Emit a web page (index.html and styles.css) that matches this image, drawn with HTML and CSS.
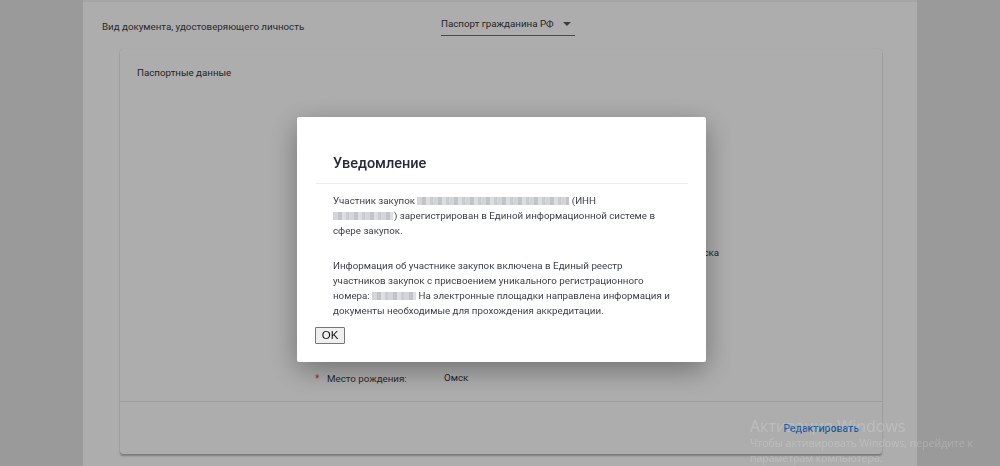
FILE: index.html
```html
<!DOCTYPE html>
<html lang="ru">
<head>
<meta charset="utf-8">
<title>Уведомление</title>
<link rel="stylesheet" href="styles.css">
</head>
<body>
<div class="page">
  <main class="main">
    <div class="doc-row">
      <span class="doc-label">Вид документа, удостоверяющего личность</span>
      <div class="select">
        <span class="select-text">Паспорт гражданина РФ</span>
        <span class="caret"></span>
      </div>
    </div>
    <section class="card">
      <h3 class="card-title">Паспортные данные</h3>
      <div class="fields">
        <div class="field"><span class="req">*</span><span class="label">Серия паспорта:</span><span class="value">5201</span></div>
        <div class="field"><span class="req">*</span><span class="label">Номер паспорта:</span><span class="value">000000</span></div>
        <div class="field"><span class="req">*</span><span class="label">Дата выдачи:</span><span class="value">01.01.2010</span></div>
        <div class="field"><span class="req">*</span><span class="label">Кем выдан:</span><span class="value">УФМС России по Омской области в Кировском АО, г. Омска</span></div>
        <div class="field"><span class="req">*</span><span class="label">Код подразделения:</span><span class="value">550-001</span></div>
        <div class="field"><span class="req">*</span><span class="label">Дата рождения:</span><span class="value">01.01.1980</span></div>
        <div class="field"><span class="req">*</span><span class="label">Место рождения:</span><span class="value value-up">Омск</span></div>
      </div>
      <div class="card-footer">
        <a class="edit">Редактировать</a>
      </div>
    </section>
  </main>
</div>

<div class="overlay"></div>

<div class="modal" role="dialog">
  <div class="modal-head">
    <h2 class="modal-title">Уведомление</h2>
  </div>
  <div class="modal-body">
    <p>Участник закупок <span class="redact r1"></span> (ИНН<br><span class="redact r2"></span>) зарегистрирован в Единой информационной системе в<br>сфере закупок.</p>
    <p>Информация об участнике закупок включена в Единый реестр<br>участников закупок с присвоением уникального регистрационного<br>номера: <span class="redact r3"></span> На электронные площадки направлена информация и<br>документы необходимые для прохождения аккредитации.</p>
  </div>
  <button class="ok-btn" type="button">OK</button>
</div>

<div class="watermark">
  <div class="wm-title">Активация Windows</div>
  <div class="wm-text">Чтобы активировать Windows, перейдите к<br>параметрам компьютера.</div>
</div>
</body>
</html>
```

FILE: styles.css
```css
html, body {
  margin: 0;
  padding: 0;
  height: 100%;
}

body {
  background: #e3e3e3;
  font-family: Roboto, "Liberation Sans", Arial, sans-serif;
  font-size: 9.75px;
  color: #3c3f47;
  overflow: hidden;
}

.page {
  min-height: 100%;
}

.main {
  width: 834px;
  margin: 0 auto;
  min-height: 466px;
  background: #ffffff;
  border-top: 2px solid #f3f3f3;
  box-sizing: border-box;
}

.doc-row {
  display: grid;
  grid-template-columns: 339px auto;
  align-items: start;
  padding: 17px 0 0 19px;
  white-space: nowrap;
}

.doc-label {
  line-height: 16px;
  color: #3a3d45;
}

.select {
  display: flex;
  align-items: center;
  width: 134px;
  box-sizing: border-box;
  margin-top: -3px;
  padding-bottom: 3px;
  border-bottom: 1px solid #6b6e75;
  line-height: 16px;
  color: #33363d;
}

.select-text {
  flex: 1;
}

.caret {
  width: 0;
  height: 0;
  margin-right: 4px;
  border-left: 4px solid transparent;
  border-right: 4px solid transparent;
  border-top: 4px solid #555960;
}

.card {
  margin: 13px 35px 0 37px;
  background: #ffffff;
  border-radius: 3px;
  box-shadow: 0 0 1px rgba(0, 0, 0, 0.18), 0 2px 2px rgba(0, 0, 0, 0.28);
}

.card-title {
  margin: 0;
  padding: 16px 17px 25px;
  font-size: 9.75px;
  font-weight: 400;
  line-height: 16px;
  color: #33363d;
}

.fields {
  padding-left: 195px;
}

.field {
  display: grid;
  grid-template-columns: 12px 117px auto;
  align-items: center;
  height: 42px;
  line-height: 16px;
  white-space: nowrap;
}

.req {
  color: #e84848;
  font-size: 10px;
}

.label {
  color: #3a3d45;
}

.value {
  color: #33363d;
}

.value-up {
  margin-top: -3px;
}

.card-footer {
  display: flex;
  justify-content: flex-end;
  align-items: center;
  height: 53px;
  margin-top: 1px;
  padding-right: 23px;
  border-top: 1px solid #e3e6ea;
  box-sizing: border-box;
}

.edit {
  color: #2e86e8;
  font-weight: 500;
  font-size: 10.5px;
  cursor: pointer;
}

.overlay {
  position: fixed;
  inset: 0;
  background: rgba(0, 0, 0, 0.32);
}

.modal {
  position: fixed;
  left: 297px;
  top: 117px;
  width: 409px;
  height: 245px;
  box-sizing: border-box;
  padding: 0 18px 0 19px;
  background: #ffffff;
  border-radius: 2px;
  box-shadow: 0 8px 28px rgba(0, 0, 0, 0.35);
}

.modal-head {
  padding: 37px 17px 9px;
  border-bottom: 1px solid #e8ebf1;
}

.modal-title {
  margin: 0;
  font-size: 14.5px;
  font-weight: 500;
  line-height: 20px;
  color: #262b3b;
}

.modal-body {
  padding: 10px 0 0 17px;
  color: #3b3f4c;
  white-space: nowrap;
}

.modal-body p {
  margin: 0 0 21px;
  line-height: 14.8px;
}

.modal-body p:last-child {
  margin-bottom: 0;
}

.redact {
  display: inline-block;
  height: 8px;
  vertical-align: -1px;
  background: repeating-linear-gradient(90deg, #d3d5da 0 5px, #c2c4ca 5px 9px, #dddee2 9px 13px, #caccd1 13px 16px);
  filter: blur(0.6px);
}

.r1 { width: 152px; }
.r2 { width: 60px; margin-right: 1px; }
.r3 { width: 44px; }

.ok-btn {
  display: block;
  margin: 8px 0 0 -1px;
  width: 30px;
  height: 17px;
  padding: 0;
  font-family: "Liberation Sans", Arial, sans-serif;
  font-size: 11.5px;
  line-height: 15px;
  color: #111111;
  background: #efefef;
  border: 1px solid #767676;
  border-radius: 1px;
}

.watermark {
  position: fixed;
  left: 750px;
  top: 417px;
  color: rgba(255, 255, 255, 0.18);
  font-family: "Open Sans", "Noto Sans", sans-serif;
  pointer-events: none;
  white-space: nowrap;
}

.wm-title {
  font-size: 16px;
  line-height: 19px;
}

.wm-text {
  font-size: 10.5px;
  line-height: 15px;
}
```
